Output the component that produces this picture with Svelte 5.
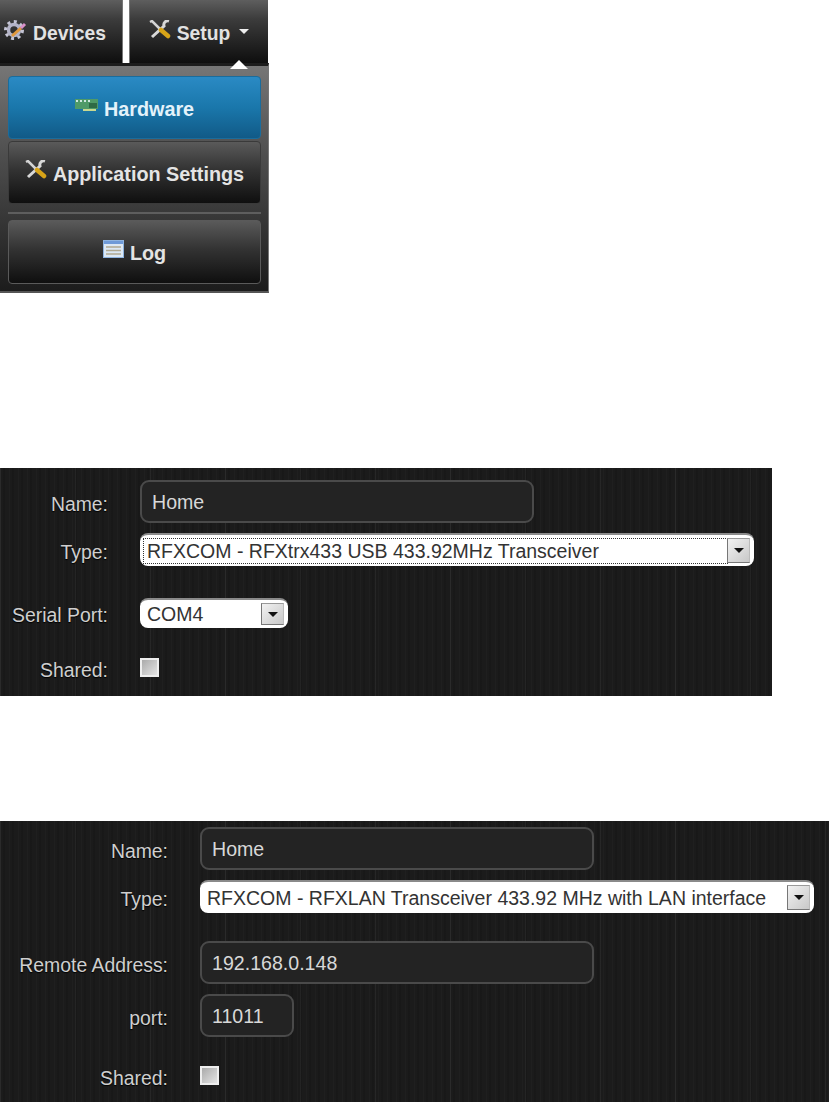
<script>
    const firstForm = {
        rows: [
            { label: "Name:", kind: "input", value: "Home", size: "wide" },
            { label: "Type:", kind: "select", value: "RFXCOM - RFXtrx433 USB 433.92MHz Transceiver", size: "full", focused: true },
            { label: "Serial Port:", kind: "select", value: "COM4", size: "small", gap: 32 },
            { label: "Shared:", kind: "check", gap: 30 },
        ],
    };

    const secondForm = {
        rows: [
            { label: "Name:", kind: "input", value: "Home", size: "wide" },
            { label: "Type:", kind: "select", value: "RFXCOM - RFXLAN Transceiver 433.92 MHz with LAN interface", size: "full" },
            { label: "Remote Address:", kind: "input", value: "192.168.0.148", size: "wide", gap: 28 },
            { label: "port:", kind: "input", value: "11011", size: "port" },
            { label: "Shared:", kind: "check", gap: 29 },
        ],
    };
</script>

{#snippet tools()}
    <svg class="icon" width="22" height="20" viewBox="0 0 22 20">
        <path d="M1 2 L3 1 L12 10" stroke="#d4d4d4" stroke-width="2.5" fill="none" />
        <path d="M20 1 A4 4 0 0 0 15 6 L3 17" stroke="#d8d8d8" stroke-width="3" fill="none" />
        <path d="M12 10 L19 16" stroke="#d8a418" stroke-width="4.5" stroke-linecap="round" />
    </svg>
{/snippet}

{#snippet formPanel(form, cls)}
    <section class="panel {cls}">
        {#each form.rows as row}
            <div class="row" class:check-row={row.kind === "check"} style:margin-top={row.gap ? row.gap + "px" : null}>
                <span class="label">{row.label}</span>
                {#if row.kind === "input"}
                    <input class="field {row.size}" type="text" value={row.value} readonly />
                {:else if row.kind === "select"}
                    <div class="select {row.size}">
                        <span class="select-text" class:focused={row.focused}>{row.value}</span>
                        <span class="select-btn"><i></i></span>
                    </div>
                {:else}
                    <span class="check"></span>
                {/if}
            </div>
        {/each}
    </section>
{/snippet}

<div class="page">
    <nav class="nav">
        <div class="tabs">
            <button class="tab devices">
                <svg class="icon" width="24" height="22" viewBox="0 0 24 22">
                    <circle cx="11" cy="11" r="5.5" fill="none" stroke="#b4b4c8" stroke-width="3.5" />
                    <circle cx="11" cy="11" r="8.5" fill="none" stroke="#c4c4d4" stroke-width="3" stroke-dasharray="3 3.6" />
                    <path d="M9 17 L18 9" stroke="#e0983c" stroke-width="3" />
                    <path d="M18 9 L22 5" stroke="#d890c8" stroke-width="3" />
                </svg>
                Devices
            </button>
            <button class="tab setup">
                {@render tools()}
                Setup
                <i class="caret"></i>
            </button>
            <i class="notch"></i>
        </div>
        <div class="menu">
            <button class="item active">
                <svg class="icon" width="23" height="14" viewBox="0 0 23 14">
                    <rect x="0" y="1" width="23" height="10" fill="#4f9a68" />
                    <path d="M1 3h2M5 3h2M9 3h2M13 3h2" stroke="#cfe8e0" stroke-width="2" />
                    <rect x="14" y="5" width="8" height="5" fill="#2f6a45" />
                    <rect x="8" y="11" width="13" height="2" fill="#c8d890" />
                </svg>
                Hardware
            </button>
            <button class="item">{@render tools()} Application Settings</button>
            <div class="sep"></div>
            <button class="item last">
                <svg class="icon" width="21" height="18" viewBox="0 0 21 18">
                    <rect x="0.5" y="0.5" width="20" height="17" fill="#dce8f4" stroke="#8fb4e0" />
                    <rect x="1" y="1" width="19" height="3" fill="#6f9ad8" />
                    <path d="M3 7h15M3 10.5h15M3 14h15" stroke="#b0a890" stroke-width="1.5" />
                </svg>
                Log
            </button>
        </div>
    </nav>

    {@render formPanel(firstForm, "first")}
    {@render formPanel(secondForm, "second")}
</div>

<style>
    :global(body) {
        background: #fff;
    }

    .page {
        width: 829px;
        height: 1102px;
        overflow: hidden;
        font-family: "Liberation Sans", Arial, sans-serif;
    }

    .nav {
        width: 269px;
    }

    .tabs {
        position: relative;
        display: flex;
        height: 63px;
    }

    .tab {
        display: flex;
        align-items: center;
        justify-content: center;
        gap: 6px;
        height: 63px;
        padding: 5px 0 0;
        border: 0;
        color: #e2e2e2;
        font: bold 19.3px "Liberation Sans", Arial, sans-serif;
        background: linear-gradient(#5e5e5e, #3c3c3c 30%, #0e0e0e);
    }

    .devices {
        width: 123px;
        padding-right: 13px;
        border-right: 1px solid #777;
    }

    .setup {
        width: 139px;
        margin-left: 6px;
        border-left: 1px solid #777;
    }

    .caret {
        margin-left: 3px;
        margin-top: -5px;
        border: 5px solid transparent;
        border-top: 5px solid #eee;
        border-bottom: 0;
    }

    /* arrow pointing up into the dropdown */
    .notch {
        position: absolute;
        z-index: 1;
        left: 230px;
        top: 60px;
        border: 9px solid transparent;
        border-bottom: 9px solid #fff;
        border-top: 0;
    }

    .menu {
        display: flex;
        flex-direction: column;
        gap: 2px;
        height: 230px;
        padding: 10px 7px 0 8px;
        box-sizing: border-box;
        border-top: 3px solid #1c1c1c;
        border-right: 1px solid #777;
        border-bottom: 2px solid #555;
        background: linear-gradient(#767676, #4e4e4e 40%, #1c1c1c);
    }

    .item {
        display: flex;
        align-items: center;
        justify-content: center;
        gap: 6px;
        flex: none;
        height: 63px;
        padding: 3px 0 0;
        border: 1px solid #3a3a3a;
        border-radius: 4px;
        color: #e4e4e4;
        font: bold 19.8px "Liberation Sans", Arial, sans-serif;
        background: linear-gradient(#5a5a5a, #333 45%, #0f0f0f);
    }

    .item.active {
        color: #e4f2fa;
        border-color: #1a6c9c;
        background: linear-gradient(#2a8ac4, #1a77ab 50%, #115a87);
    }

    .item.last {
        height: 64px;
        border-color: #5a5a5a;
    }

    .sep {
        flex: none;
        height: 2px;
        margin: 6px 0 4px;
        background: #5e5e5e;
    }

    .icon {
        flex: none;
        margin-top: -9px;
    }

    .panel {
        display: flow-root;
        background-color: #1b1b1b;
        background-image:
            repeating-linear-gradient(90deg, rgba(255, 255, 255, 0.05) 0 1px, transparent 1px 75px),
            repeating-linear-gradient(90deg, rgba(255, 255, 255, 0.018) 0 1px, transparent 1px 3px, rgba(0, 0, 0, 0.1) 3px 5px, transparent 5px 9px);
    }

    .first {
        width: 772px;
        height: 228px;
        margin-top: 175px;
        padding-top: 12px;
        box-sizing: border-box;
        --label: 108px;
        --gap: 32px;
    }

    .second {
        width: 829px;
        height: 281px;
        margin-top: 125px;
        padding-top: 6px;
        box-sizing: border-box;
        --label: 168px;
        --gap: 32px;
    }

    .row {
        display: flex;
        align-items: center;
        gap: var(--gap);
        margin-top: 10px;
    }

    .row:first-child {
        margin-top: 0;
    }

    .check-row {
        height: 19px;
    }

    .label {
        width: var(--label);
        flex: none;
        padding-top: 5px;
        text-align: right;
        color: #cfcfcf;
        font-size: 19.4px;
        text-shadow: 0 1px 1px #000;
    }

    .field {
        height: 43px;
        padding: 1px 10px 0;
        box-sizing: border-box;
        border: 2px solid #4a4a4a;
        border-radius: 9px;
        outline: none;
        color: #d8d8d8;
        font: 19.6px "Liberation Sans", Arial, sans-serif;
        background: #232323;
    }

    .wide {
        width: 394px;
    }

    .port {
        width: 94px;
    }

    .select {
        display: flex;
        align-items: center;
        justify-content: space-between;
        height: 33px;
        padding: 3px 3px 3px 4px;
        box-sizing: border-box;
        border-top: 2px solid #8a8a8a;
        border-radius: 8px;
        color: #333;
        font-size: 19.5px;
        background: #fff;
    }

    .select.full {
        flex: 1;
        max-width: 614px;
    }

    .select.small {
        width: 148px;
        height: 30px;
    }

    .select-text {
        flex: 1;
        padding: 1px 3px;
        white-space: nowrap;
        line-height: 22px;
    }

    .select-text.focused {
        outline: 1px dotted #333;
    }

    .select-btn {
        display: flex;
        align-items: center;
        justify-content: center;
        flex: none;
        width: 23px;
        height: 100%;
        margin-right: 1px;
        border: 1px solid #777;
        border-color: #999 #bbb #777 #777;
        box-sizing: border-box;
        background: linear-gradient(135deg, #f2f2f2, #c8c8c8);
    }

    .select-btn i {
        border: 5px solid transparent;
        border-top: 5px solid #111;
        border-bottom: 0;
    }

    .check {
        width: 19px;
        height: 19px;
        flex: none;
        box-sizing: border-box;
        border: 2px solid #eee;
        background: linear-gradient(135deg, #aaa, #e4e4e4);
    }
</style>
